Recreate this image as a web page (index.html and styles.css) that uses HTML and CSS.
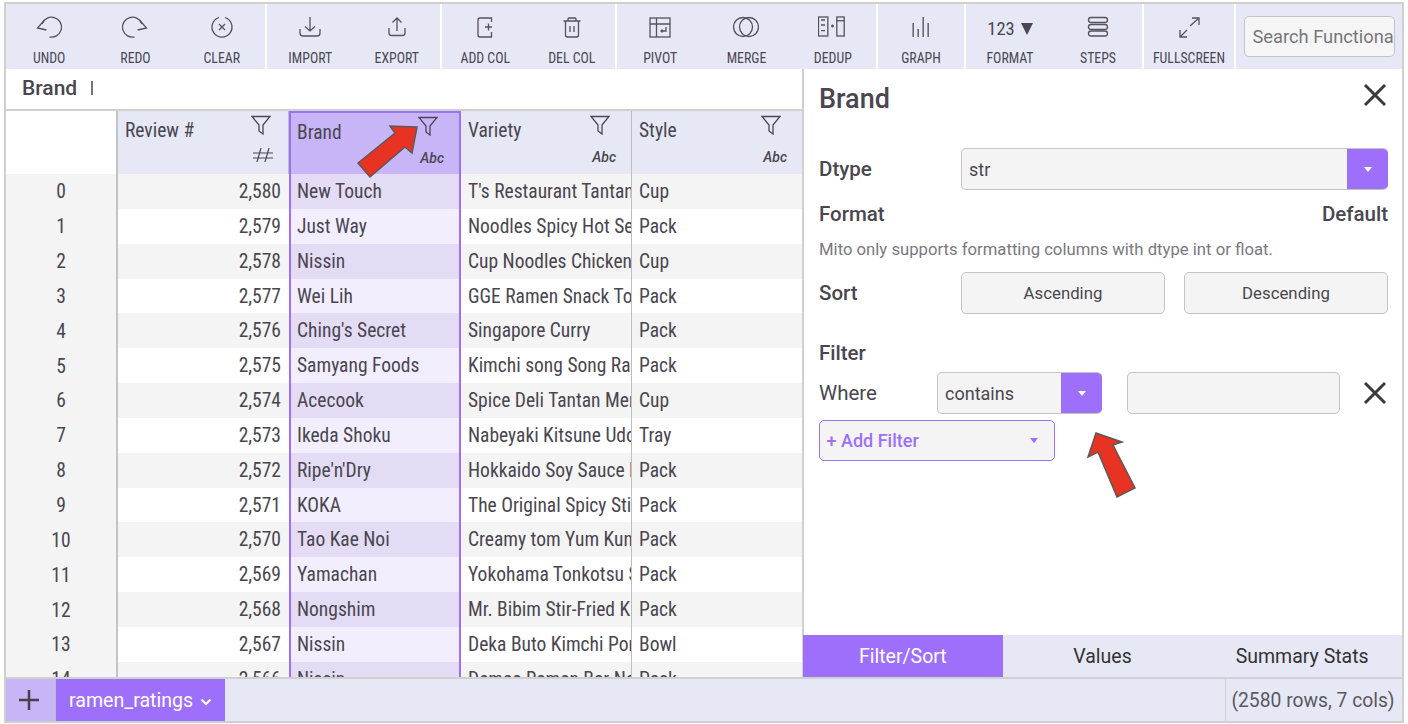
FILE: index.html
```html
<!DOCTYPE html>
<html lang="en">
<head>
  <meta charset="UTF-8">
  <title>Mito</title>
  <link rel="stylesheet" href="styles.css">
</head>
<body>
  <div class="app">
    <div class="toolbar">
      <div class="group">
        <div class="tool"><svg class="icon" viewBox="0 0 26 26"><path d="M6 10 A10 10 0 1 1 13.500 23"/><path d="M8.500 6 L1.500 14 L10.500 16"/></svg><span>Undo</span></div>
        <div class="tool"><svg class="icon" viewBox="0 0 26 26"><path d="M20 10 A10 10 0 1 0 12.500 23"/><path d="M17.500 6 L24.500 14 L15.500 16"/></svg><span>Redo</span></div>
        <div class="tool"><svg class="icon" viewBox="0 0 26 26"><path d="M10 3.500 A10 10 0 1 0 16 3.500"/><path d="M10 10 L16 16 M16 10 L10 16"/></svg><span>Clear</span></div>
      </div>
      <div class="group">
        <div class="tool"><svg class="icon" viewBox="0 0 26 26"><path d="M13 3 V17 M8 12.500 L13 17 L18 12.500"/><path d="M3 15 V19 Q3 22 6 22 H20 Q23 22 23 19 V15"/></svg><span>Import</span></div>
        <div class="tool"><svg class="icon" viewBox="0 0 26 26"><path d="M13 17 V4 M8.500 8.500 L13 4 L17.500 8.500"/><path d="M5 14 V19 Q5 21.500 7.500 21.500 H18.500 Q21 21.500 21 19 V14"/></svg><span>Export</span></div>
      </div>
      <div class="group">
        <div class="tool"><svg class="icon" viewBox="0 0 26 26"><path d="M19.500 8 V4 H8 Q6 4 6 6 V21 Q6 23 8 23 H19.500 V18"/><path d="M16.500 9.500 V16.500 M13 13 H20"/></svg><span>Add Col</span></div>
        <div class="tool"><svg class="icon" viewBox="0 0 26 26"><path d="M4.500 7 H21.500 M9 7 V5 Q9 4 10 4 H16 Q17 4 17 5 V7"/><path d="M6.500 7 V21 Q6.500 23 8.500 23 H17.500 Q19.500 23 19.500 21 V7"/><path d="M11 12 V18 M15 12 V18"/></svg><span>Del Col</span></div>
      </div>
      <div class="group">
        <div class="tool"><svg class="icon" viewBox="0 0 26 26"><rect x="3" y="4" width="20" height="19"/><path d="M3 10 H23 M9.500 4 V23"/><path d="M19 13 V17 H14 M15.500 15.500 L14 17 L15.500 18.500"/></svg><span>Pivot</span></div>
        <div class="tool"><svg class="icon" viewBox="0 0 26 26"><circle cx="10" cy="13" r="9.500"/><circle cx="16" cy="13" r="9.500"/></svg><span>Merge</span></div>
        <div class="tool"><svg class="icon wide" viewBox="0 0 30 26"><rect x="0.500" y="3" width="9.300" height="19"/><path d="M3 6 H7 M3 11 H7 M3 16.700 H7"/><rect x="18.800" y="3" width="7.400" height="19"/><path d="M18.800 6.700 H26.200"/><path d="M13 12 H16 M14.500 10.500 V13.500"/></svg><span>Dedup</span></div>
      </div>
      <div class="group">
        <div class="tool"><svg class="icon thick" viewBox="0 0 26 26"><path d="M5.200 9 V23 M10.200 15 V23 M15.200 3 V23 M20.200 9 V23"/></svg><span>Graph</span></div>
      </div>
      <div class="group">
        <div class="tool"><div class="format-icon">123<i class="format-arrow"></i></div><span>Format</span></div>
        <div class="tool"><svg class="icon" viewBox="0 0 26 26"><rect x="3.500" y="3.500" width="19" height="5" rx="2.500"/><rect x="3.500" y="10.500" width="19" height="5" rx="2.500"/><rect x="3.500" y="17" width="19" height="5" rx="2.500"/></svg><span>Steps</span></div>
      </div>
      <div class="group">
        <div class="tool"><svg class="icon" viewBox="0 0 26 26"><path d="M14 12 L23 4 M16 4 H23 V11"/><path d="M11 16 L4 23 M4 16 V23 H11"/></svg><span>Fullscreen</span></div>
      </div>
      <div class="search-wrap"><input class="search" type="text" placeholder="Search Functionality"></div>
    </div>

    <div class="main">
      <div class="sheet">
        <div class="formula-bar"><b>Brand</b><span class="caret"></span></div>
        <div class="grid">
          <div class="corner"></div>
          <div class="head num-head">
            <span>Review #</span>
            <div class="head-side"><svg class="funnel" viewBox="0 0 20 20"><path d="M1 1.500 H19 L12 10 V19 L8 16 V10 Z"/></svg><svg class="hash" viewBox="0 0 20 14"><path d="M0 5 H20 M0 10 H20 M8 0 L4 14 M16 0 L12 14"/></svg></div>
          </div>
          <div class="head brand">
            <span>Brand</span>
            <div class="head-side"><svg class="funnel" viewBox="0 0 20 20"><path d="M1 1.500 H19 L12 10 V19 L8 16 V10 Z"/></svg><em>Abc</em></div>
          </div>
          <div class="head">
            <span>Variety</span>
            <div class="head-side"><svg class="funnel" viewBox="0 0 20 20"><path d="M1 1.500 H19 L12 10 V19 L8 16 V10 Z"/></svg><em>Abc</em></div>
          </div>
          <div class="head last">
            <span>Style</span>
            <div class="head-side"><svg class="funnel" viewBox="0 0 20 20"><path d="M1 1.500 H19 L12 10 V19 L8 16 V10 Z"/></svg><em>Abc</em></div>
          </div>

          <div class="idx">0</div><div class="cell num alt">2,580</div><div class="cell brand alt">New Touch</div><div class="cell var alt">T's Restaurant Tantanmen</div><div class="cell alt">Cup</div>
          <div class="idx">1</div><div class="cell num">2,579</div><div class="cell brand">Just Way</div><div class="cell var">Noodles Spicy Hot Sesame</div><div class="cell">Pack</div>
          <div class="idx">2</div><div class="cell num alt">2,578</div><div class="cell brand alt">Nissin</div><div class="cell var alt">Cup Noodles Chicken Vegetable</div><div class="cell alt">Cup</div>
          <div class="idx">3</div><div class="cell num">2,577</div><div class="cell brand">Wei Lih</div><div class="cell var">GGE Ramen Snack Tomato</div><div class="cell">Pack</div>
          <div class="idx">4</div><div class="cell num alt">2,576</div><div class="cell brand alt">Ching's Secret</div><div class="cell var alt">Singapore Curry</div><div class="cell alt">Pack</div>
          <div class="idx">5</div><div class="cell num">2,575</div><div class="cell brand">Samyang Foods</div><div class="cell var">Kimchi song Song Ramen</div><div class="cell">Pack</div>
          <div class="idx">6</div><div class="cell num alt">2,574</div><div class="cell brand alt">Acecook</div><div class="cell var alt">Spice Deli Tantan Men With</div><div class="cell alt">Cup</div>
          <div class="idx">7</div><div class="cell num">2,573</div><div class="cell brand">Ikeda Shoku</div><div class="cell var">Nabeyaki Kitsune Udon</div><div class="cell">Tray</div>
          <div class="idx">8</div><div class="cell num alt">2,572</div><div class="cell brand alt">Ripe'n'Dry</div><div class="cell var alt">Hokkaido Soy Sauce Ramen</div><div class="cell alt">Pack</div>
          <div class="idx">9</div><div class="cell num">2,571</div><div class="cell brand">KOKA</div><div class="cell var">The Original Spicy Stir-Fried</div><div class="cell">Pack</div>
          <div class="idx">10</div><div class="cell num alt">2,570</div><div class="cell brand alt">Tao Kae Noi</div><div class="cell var alt">Creamy tom Yum Kung Flavour</div><div class="cell alt">Pack</div>
          <div class="idx">11</div><div class="cell num">2,569</div><div class="cell brand">Yamachan</div><div class="cell var">Yokohama Tonkotsu Shoyu</div><div class="cell">Pack</div>
          <div class="idx">12</div><div class="cell num alt">2,568</div><div class="cell brand alt">Nongshim</div><div class="cell var alt">Mr. Bibim Stir-Fried Kimchi</div><div class="cell alt">Pack</div>
          <div class="idx">13</div><div class="cell num">2,567</div><div class="cell brand">Nissin</div><div class="cell var">Deka Buto Kimchi Pork Flavor</div><div class="cell">Bowl</div>
          <div class="idx">14</div><div class="cell num alt">2,566</div><div class="cell brand alt">Nissin</div><div class="cell var alt">Demae Ramen Bar Noodle</div><div class="cell alt">Pack</div>
        </div>
      </div>

      <div class="pane">
        <div class="pane-body">
          <div class="pane-head">
            <h1>Brand</h1>
            <svg class="close" viewBox="0 0 24 24"><path d="M2 2 L22 22 M22 2 L2 22"/></svg>
          </div>
          <div class="row dtype-row">
            <label>Dtype</label>
            <div class="select dtype"><span>str</span><div class="select-btn"><i></i></div></div>
          </div>
          <div class="row between format-row">
            <label>Format</label>
            <label>Default</label>
          </div>
          <p class="note">Mito only supports formatting columns with dtype int or float.</p>
          <div class="row sort-row">
            <label>Sort</label>
            <div class="sort-btns">
              <button>Ascending</button>
              <button>Descending</button>
            </div>
          </div>
          <label class="filter-title">Filter</label>
          <div class="row where-row">
            <span class="where">Where</span>
            <div class="select contains"><span>contains</span><div class="select-btn"><i></i></div></div>
            <div class="text-box"></div>
            <svg class="close" viewBox="0 0 24 24"><path d="M2 2 L22 22 M22 2 L2 22"/></svg>
          </div>
          <div class="add-filter"><span>+ Add Filter</span><i></i></div>
        </div>
        <div class="pane-tabs">
          <div class="pane-tab active">Filter/Sort</div>
          <div class="pane-tab">Values</div>
          <div class="pane-tab">Summary Stats</div>
        </div>
      </div>
    </div>

    <div class="footer">
      <div class="add-sheet"><svg viewBox="0 0 20 20"><path d="M10 0 V20 M0 10 H20"/></svg></div>
      <div class="sheet-tab"><span>ramen_ratings</span><svg viewBox="0 0 12 8"><path d="M1.500 1.500 L6 6 L10.500 1.500"/></svg></div>
      <div class="stats">(2580 rows, 7 cols)</div>
    </div>
  </div>

  <svg class="arrow" viewBox="0 0 1408 724">
    <polygon points="417,127 390,126 395,133 358,163 370,177 405,147 412,153"/>
    <polygon points="1096,433 1088,457 1098,452 1117,497 1135,488 1113,445 1122,442"/>
  </svg>
</body>
</html>
```

FILE: styles.css
```css
* {
  box-sizing: border-box;
}

body {
  margin: 0;
  height: 724px;
  padding: 2px 4px 1px;
  background-color: #fff;
  font-family: Roboto, "Liberation Sans", sans-serif;
  color: #494650;
  overflow: hidden;
}

.app {
  height: 721px;
  border: 2px solid #cfcfcf;
  display: flex;
  flex-direction: column;
}

/* toolbar */
.toolbar {
  height: 65px;
  flex: none;
  display: grid;
  grid-template-columns: 261px 175px 175px 261px 88px 178px 92px 1fr;
  background-color: #e6e8f6;
}

.group {
  display: flex;
  border-right: 2px solid #fff;
}

.tool {
  flex: 1;
  display: flex;
  flex-direction: column;
  align-items: center;
  padding-top: 10px;
  font-size: 13.800px;
  font-stretch: 82%;
  text-transform: uppercase;
  color: #4a4752;
}

.tool span {
  margin-top: auto;
  margin-bottom: 3px;
}

.icon {
  width: 26px;
  height: 26px;
  fill: none;
  stroke: #55525c;
  stroke-width: 1.300;
}

.icon.wide {
  width: 30px;
}

.icon.thick {
  stroke-width: 1.600;
  stroke: #6a6870;
}

.format-icon {
  height: 28px;
  font-size: 18.500px;
  line-height: 28px;
  margin-top: 1px;
  display: flex;
  align-items: center;
}

.format-arrow {
  width: 0;
  height: 0;
  margin-left: 6px;
  border-left: 6.500px solid transparent;
  border-right: 6.500px solid transparent;
  border-top: 12px solid #4a4752;
}

.search-wrap {
  padding: 12px 7px 0 8px;
}

.search {
  width: 100%;
  height: 41px;
  padding: 0 0 0 7.500px;
  border: 1.500px solid #c4c4c8;
  border-radius: 5px;
  background-color: #f5f5f5;
  font-family: inherit;
  font-size: 18.300px;
  color: #666;
}

.search::placeholder {
  color: #77757c;
}

/* main area */
.main {
  flex: 1;
  min-height: 0;
  display: flex;
}

.sheet {
  width: 796px;
  flex: none;
  display: flex;
  flex-direction: column;
}

.formula-bar {
  height: 42px;
  flex: none;
  display: flex;
  align-items: center;
  padding-left: 16px;
  padding-bottom: 3px;
  border-bottom: 2px solid #d0d0d0;
  font-size: 21px;
}

.formula-bar b {
  font-weight: 500;
}

.caret {
  width: 1.500px;
  height: 14px;
  margin-left: 14px;
  background-color: #77757c;
}

.grid {
  flex: 1;
  min-height: 0;
  overflow: hidden;
  display: grid;
  grid-template-columns: 112px 171px 172px 171px 170px;
  grid-auto-rows: 34.850px;
  grid-template-rows: 63px;
  font-size: 19.500px;
  font-stretch: 85%;
}

.corner {
  border-right: 2px solid #c4c4c4;
}

.head {
  display: flex;
  justify-content: space-between;
  padding: 8px 15px 0 7px;
  background-color: #e6e8f6;
  border-right: 1px solid #bdbdc4;
  font-size: 19.500px;
}

.head.last {
  border-right: none;
}

.head.brand {
  background-color: #c8b5f7;
  border: 2px solid #9d6ffb;
  border-bottom: none;
  padding-left: 6px;
}

.head-side {
  width: 28px;
  display: flex;
  flex-direction: column;
  align-items: flex-end;
  margin-top: -4px;
}

.head.brand .head-side {
  margin-top: -5px;
}

.funnel {
  width: 20px;
  height: 20px;
  flex: none;
  margin-right: 6px;
  fill: none;
  stroke: #4a4752;
  stroke-width: 1.300;
}

.num-head .funnel {
  margin-right: 2px;
}

.head-side em {
  margin-top: 14px;
  font-size: 14px;
  line-height: 16px;
  font-weight: 500;
  font-stretch: 100%;
}

.hash {
  width: 20px;
  height: 14px;
  flex: none;
  margin-top: 13px;
  fill: none;
  stroke: #4a4752;
  stroke-width: 1.200;
}

.idx {
  display: flex;
  align-items: center;
  justify-content: center;
  padding-top: 1px;
  background-color: #f4f4f4;
  border-right: 2px solid #c4c4c4;
}

.cell {
  padding: 0 8px 0 7px;
  line-height: 36px;
  white-space: nowrap;
  overflow: hidden;
  background-color: #fff;
}

.cell.var {
  padding-right: 0;
  border-right: 1px solid #bdbdc4;
}

.cell.alt {
  background-color: #f4f4f4;
}

.cell.num {
  text-align: right;
}

.cell.brand {
  background-color: #f3eefe;
  border-left: 2px solid #9d6ffb;
  border-right: 2px solid #9d6ffb;
  padding-left: 6px;
}

.cell.brand.alt {
  background-color: #e4dcf4;
}

/* taskpane */
.pane {
  flex: 1;
  display: flex;
  flex-direction: column;
  border-left: 2px solid #d0d0d0;
  background-color: #fff;
}

.pane-body {
  flex: 1;
  padding: 0 14px 0 15px;
}

.pane-head {
  height: 59px;
  display: flex;
  justify-content: space-between;
  align-items: center;
}

h1 {
  margin: 0;
  font-size: 27px;
  font-weight: 500;
}

.close {
  width: 24px;
  height: 24px;
  flex: none;
  fill: none;
  stroke: #3a3a3e;
  stroke-width: 3;
}

.pane-head .close {
  margin-right: 1px;
  margin-top: -7px;
}

.row {
  display: flex;
  align-items: center;
}

.between {
  justify-content: space-between;
}

label {
  font-size: 20.500px;
  font-weight: 500;
}

.dtype-row {
  margin-top: 20px;
  height: 42px;
}

.dtype-row label,
.sort-row label {
  width: 142px;
  flex: none;
}

.select {
  height: 42px;
  display: flex;
  align-items: center;
  justify-content: space-between;
  padding-left: 7px;
  border: 1.500px solid #c4c4c8;
  border-right: none;
  border-radius: 5px;
  background-color: #f4f4f4;
  font-size: 18px;
  overflow: hidden;
}

.dtype {
  flex: 1;
}

.select-btn {
  width: 41px;
  height: 42px;
  background-color: #9d6ffb;
  display: flex;
  align-items: center;
  justify-content: center;
}

.select-btn i,
.add-filter i {
  width: 0;
  height: 0;
  border-left: 4.500px solid transparent;
  border-right: 4.500px solid transparent;
  border-top: 5px solid #fff;
}

.format-row {
  margin-top: 9px;
  height: 30px;
}

.note {
  margin: 11px 0 0;
  font-size: 16.700px;
  line-height: 20px;
  color: #7a7880;
}

.sort-row {
  margin-top: 12px;
}

.sort-btns {
  flex: 1;
  display: flex;
  gap: 19px;
}

.sort-btns button {
  flex: 1;
  height: 42px;
  border: 1.500px solid #c4c4c8;
  border-radius: 5px;
  background-color: #f4f4f4;
  font-family: inherit;
  font-size: 16.800px;
  color: #494650;
}

.filter-title {
  display: block;
  margin-top: 27px;
  line-height: 24px;
}

.where-row {
  margin-top: 7px;
}

.where {
  width: 118px;
  flex: none;
  font-size: 20.500px;
}

.contains {
  width: 165px;
  flex: none;
}

.text-box {
  width: 213px;
  height: 42px;
  flex: none;
  margin-left: 25px;
  margin-right: 23px;
  border: 1.500px solid #c4c4c8;
  border-radius: 5px;
  background-color: #f4f4f4;
}

.add-filter {
  width: 236px;
  height: 41px;
  margin-top: 6px;
  display: flex;
  align-items: center;
  justify-content: space-between;
  padding: 0 16px 0 6.500px;
  border: 1.500px solid #9d6ffb;
  border-radius: 5px;
  background-color: #f4f4f4;
  color: #9d6ffb;
  font-size: 18px;
  font-weight: 500;
}

.add-filter i {
  border-top-color: #9d6ffb;
}

.pane-tabs {
  height: 42px;
  flex: none;
  margin-left: -1px;
  display: grid;
  grid-template-columns: repeat(3, 1fr);
  background-color: #e6e8f6;
  font-size: 19.500px;
  color: #333;
}

.pane-tab {
  display: flex;
  align-items: center;
  justify-content: center;
}

.pane-tab.active {
  background-color: #9d6ffb;
  color: #fff;
}

/* sheet tabs */
.footer {
  height: 44px;
  flex: none;
  display: flex;
  background-color: #e6e8f6;
  border-top: 2px solid #d0d0d0;
}

.add-sheet {
  width: 50px;
  display: flex;
  align-items: center;
  padding-left: 13px;
  background-color: #c8b5f7;
  border-right: 1px solid #bdbdc4;
}

.add-sheet svg {
  width: 20px;
  height: 20px;
  fill: none;
  stroke: #45424c;
  stroke-width: 2.500;
}

.sheet-tab {
  width: 169px;
  display: flex;
  align-items: center;
  padding-left: 13px;
  gap: 7px;
  background-color: #9d6ffb;
  color: #fff;
  font-size: 19.600px;
}

.sheet-tab svg {
  width: 12px;
  height: 8px;
  margin-top: 3px;
  fill: none;
  stroke: #fff;
  stroke-width: 2;
}

.stats {
  margin-left: auto;
  width: 177px;
  display: flex;
  align-items: center;
  justify-content: center;
  padding-right: 2px;
  border-left: 1.500px solid #d0d0d0;
  font-size: 19.300px;
  color: #5a5860;
}

/* the red arrows drawn over the screenshot */
.arrow {
  position: absolute;
  left: 0;
  top: 0;
  width: 1408px;
  height: 724px;
  pointer-events: none;
}

.arrow polygon {
  fill: #e83222;
  stroke: #5a5a5a;
  stroke-width: 1.500;
}
```
